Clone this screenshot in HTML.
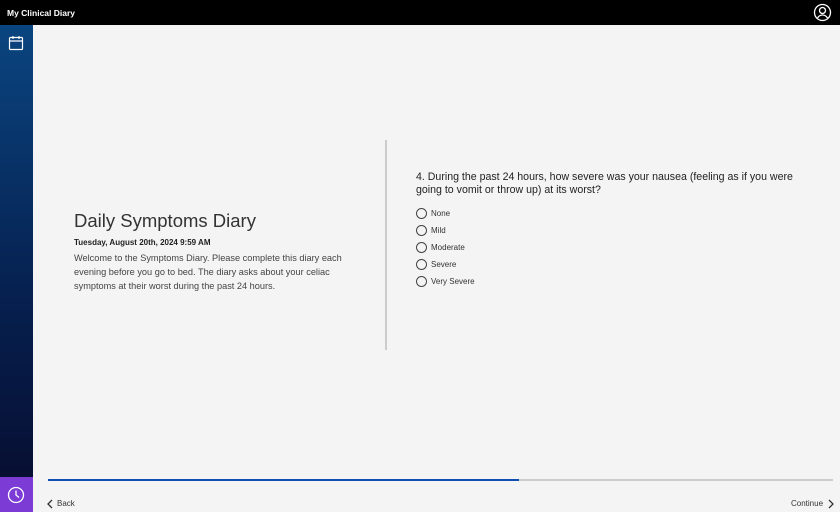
<!DOCTYPE html>
<html><head><style>
*{margin:0;padding:0;box-sizing:border-box}
body{width:840px;height:512px;overflow:hidden;background:#f4f4f4;font-family:"Liberation Sans",sans-serif;position:relative;color:#222}
.hdr{position:absolute;left:0;top:0;width:840px;height:25px;background:#000;color:#fff;font-size:8.5px;font-weight:bold;padding:8px 0 0 7px}
.side{position:absolute;left:0;top:25px;width:33px;height:452px;background:linear-gradient(#0a4580,#06204f 60%,#070f33)}
.clock{position:absolute;left:0;top:477px;width:33px;height:35px;background:#7c3bd4}
.t{position:absolute}
.radio{position:absolute;left:416px;width:11px;height:11px;border:1.3px solid #444;border-radius:50%}
.lab{position:absolute;left:431px;font-size:8px;color:#333}
</style></head><body>
<div class="hdr">My Clinical Diary</div>
<svg class="t" style="left:813px;top:3px" width="19" height="19" viewBox="0 0 19 19" fill="none" stroke="#fff" stroke-width="1.3"><circle cx="9.5" cy="9.5" r="8"/><circle cx="9.5" cy="7.5" r="3"/><path d="M4.5 15c1.5-2.5 3-3 5-3s3.5.5 5 3"/></svg>
<div class="side"></div>
<svg class="t" style="left:8px;top:35px" width="16" height="16" viewBox="0 0 16 16" fill="none" stroke="#fff" stroke-width="1.2"><rect x="1.5" y="2.5" width="13" height="12" rx="1"/><path d="M1.5 6h13M5 1v3M11 1v3"/></svg>
<div class="clock"></div>
<svg class="t" style="left:7px;top:486px" width="18" height="18" viewBox="0 0 18 18" fill="none" stroke="#fff" stroke-width="1.3"><circle cx="9" cy="9" r="7.5"/><path d="M9 4.5V9l3 2.5"/></svg>
<div class="t" style="left:74px;top:210px;font-size:18.5px;color:#333">Daily Symptoms Diary</div>
<div class="t" style="left:74px;top:238px;font-size:8px;font-weight:bold;color:#222">Tuesday, August 20th, 2024 9:59 AM</div>
<div class="t" style="left:74px;top:251px;width:280px;font-size:9.2px;line-height:14px;color:#444">Welcome to the Symptoms Diary. Please complete this diary each evening before you go to bed. The diary asks about your celiac symptoms at their worst during the past 24 hours.</div>
<div class="t" style="left:385px;top:140px;width:2px;height:210px;background:#ccc"></div>
<div class="t" style="left:416px;top:171px;width:380px;font-size:10.6px;line-height:13px;color:#222">4. During the past 24 hours, how severe was your nausea (feeling as if you were going to vomit or throw up) at its worst?</div>
<div class="radio" style="top:208px"></div><div class="lab" style="top:209px">None</div>
<div class="radio" style="top:225px"></div><div class="lab" style="top:226px">Mild</div>
<div class="radio" style="top:242px"></div><div class="lab" style="top:243px">Moderate</div>
<div class="radio" style="top:259px"></div><div class="lab" style="top:260px">Severe</div>
<div class="radio" style="top:276px"></div><div class="lab" style="top:277px">Very Severe</div>
<div class="t" style="left:48px;top:479px;width:785px;height:2px;background:#ccc"></div>
<div class="t" style="left:48px;top:479px;width:471px;height:2px;background:#0f4fb0"></div>
<svg class="t" style="left:46px;top:499px" width="8" height="10" viewBox="0 0 8 10" fill="none" stroke="#333" stroke-width="1.3"><path d="M6 1L2 5l4 4"/></svg>
<div class="t" style="left:57px;top:499px;font-size:8px;color:#333">Back</div>
<div class="t" style="left:791px;top:499px;font-size:8px;color:#333">Continue</div>
<svg class="t" style="left:827px;top:499px" width="8" height="10" viewBox="0 0 8 10" fill="none" stroke="#333" stroke-width="1.3"><path d="M2 1l4 4-4 4"/></svg>
</body></html>
